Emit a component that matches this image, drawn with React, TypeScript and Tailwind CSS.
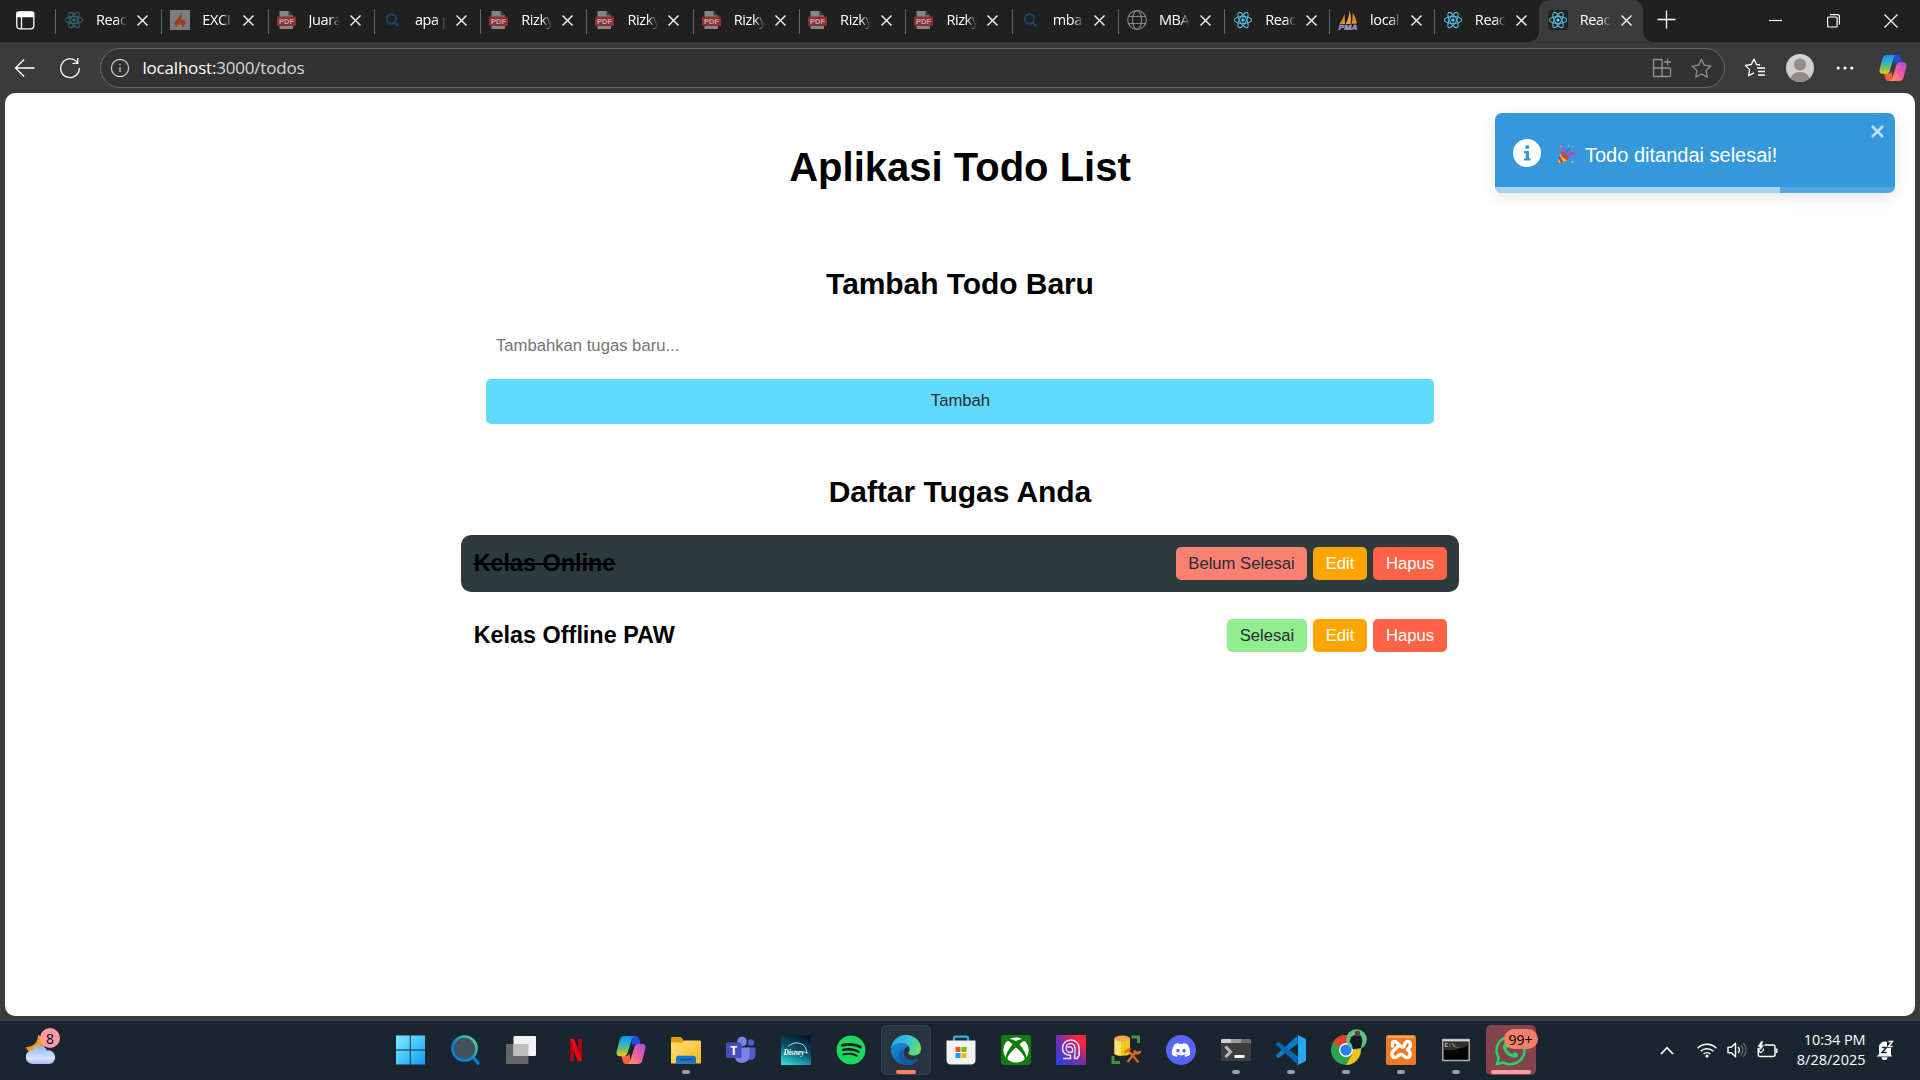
import React from "react";
import { FaDiscord, FaSpotify, FaWhatsapp, FaXbox } from "react-icons/fa";

type TabKind = "react" | "fire" | "pdf" | "search" | "globe" | "pma";
type TabInfo = { kind: TabKind; title: string; dim?: boolean; active?: boolean; narrow?: boolean };

const tabs: TabInfo[] = [
  { kind: "react", title: "Reac", dim: true },
  { kind: "fire", title: "EXCI" },
  { kind: "pdf", title: "Juara" },
  { kind: "search", title: "apa p" },
  { kind: "pdf", title: "Rizky" },
  { kind: "pdf", title: "Rizky" },
  { kind: "pdf", title: "Rizky" },
  { kind: "pdf", title: "Rizky" },
  { kind: "pdf", title: "Rizky" },
  { kind: "search", title: "mba" },
  { kind: "globe", title: "MBA" },
  { kind: "react", title: "Reac", narrow: true },
  { kind: "pma", title: "local", narrow: true },
  { kind: "react", title: "Reac", narrow: true },
  { kind: "react", title: "Reac", narrow: true, active: true },
];

function ReactLogo() {
  return (
    <svg width="20" height="20" viewBox="0 0 20 20" fill="none" stroke="#4fb8d3" strokeWidth="1.1">
      <ellipse cx="10" cy="10" rx="8.6" ry="3.4" />
      <ellipse cx="10" cy="10" rx="8.6" ry="3.4" transform="rotate(60 10 10)" />
      <ellipse cx="10" cy="10" rx="8.6" ry="3.4" transform="rotate(120 10 10)" />
      <circle cx="10" cy="10" r="1.6" fill="#61dafb" stroke="none" />
    </svg>
  );
}

function TabIcon({ kind }: { kind: TabKind }) {
  switch (kind) {
    case "react":
      return <ReactLogo />;
    case "fire":
      return (
        <svg width="20" height="20" viewBox="0 0 20 20">
          <rect width="20" height="20" fill="#7d7d7d" />
          <path d="M9.6 2.8c1.6 2.3-.6 4.1-2.3 6-1.400 1.600-2.900 3.200-2.700 5.300.2 1.700 1.300 3 2.900 3.500-.9-1.300-.6-2.700.7-3.700.1 1 .7 1.300 1.300 1.300.9-.1 1.200-1 .8-2 1.700.9 2.500 2.900 1.100 4.400 2.200-.6 4.100-2.400 4-4.900-.1-1.800-1.300-2.700-2-3.900-.4.500-.4 1-.3 1.600-1.400-.4-1.600-1.500-1.400-2.800.2-1.900-.6-3.900-2.100-4.800z" fill="#98401b" />
        </svg>
      );
    case "pdf":
      return (
        <svg width="20" height="20" viewBox="0 0 20 20">
          <path d="M2.500 1h9l4.500 4.500V19H2.500z" fill="#858585" />
          <path d="M11.500 1l4.500 4.500h-4.500z" fill="#3c3c3c" />
          <rect x="0" y="6.500" width="19" height="9.500" rx="1" fill="#8d2f33" />
          <text x="9.500" y="14" textAnchor="middle" fontSize="7.500" fontWeight="700" fontFamily="Liberation Sans, sans-serif" fill="#b9b1b1" textLength="15">
            PDF
          </text>
        </svg>
      );
    case "search":
      return (
        <svg width="20" height="20" viewBox="0 0 20 20" fill="none" stroke="#1c446b" strokeWidth="2">
          <circle cx="8.500" cy="9" r="4.700" />
          <path d="M11.800 12.500l3.600 3.800" />
        </svg>
      );
    case "globe":
      return (
        <svg width="20" height="20" viewBox="0 0 20 20" fill="none" stroke="#858585" strokeWidth="1.200">
          <circle cx="10" cy="10" r="9.300" />
          <ellipse cx="10" cy="10" rx="4.500" ry="9.300" />
          <path d="M1.500 6.500h17M1.500 13.500h17" />
        </svg>
      );
    case "pma":
      return (
        <svg width="20" height="20" viewBox="0 0 20 20">
          <path d="M6.500 3.500L7 14H1.500C3.500 11 5.500 8 6.500 3.500z" fill="#e98a22" />
          <path d="M11.500.3C13 5 13.300 10 12.500 14H7.800C10 10 11.300 5 11.500.3z" fill="#f6a02c" />
          <path d="M14.500 3c2.500 3 3.500 6 4.500 10.500l-5.500.5c1-4 1.300-7 1-11z" fill="#e98a22" />
          <text x="10" y="19.500" textAnchor="middle" fontSize="7.500" fontStyle="italic" fontWeight="700" fontFamily="Liberation Sans, sans-serif" fill="#6d70a8" stroke="#b9bbd8" strokeWidth=".4" textLength="19" lengthAdjust="spacingAndGlyphs">
            PMA
          </text>
        </svg>
      );
  }
}

function CloseGlyph() {
  return (
    <svg width="11" height="11" viewBox="0 0 11 11" stroke="#fff" strokeWidth="1.350" fill="none">
      <path d="M.5.500l10 10M10.500.500l-10 10" />
    </svg>
  );
}

function Tab({ tab }: { tab: TabInfo }) {
  return (
    <div className={`relative h-[42px] shrink-0 ${tab.narrow ? "w-[104.8px]" : "w-[106.3px]"} ${tab.active ? "rounded-t-[10px] bg-[#3b3b3b]" : ""}`}>
      {tab.active && (
        <>
          <div className="absolute bottom-0 -left-[10px] size-[10px] bg-[radial-gradient(circle_at_0_0,transparent_9.500px,#3b3b3b_10px)]" />
          <div className="absolute -right-[10px] bottom-0 size-[10px] bg-[radial-gradient(circle_at_100%_0,transparent_9.500px,#3b3b3b_10px)]" />
        </>
      )}
      <div className="flex h-[42px] items-start">
        <div className={`mt-[9px] h-[25px] w-px shrink-0 ${tab.active ? "bg-transparent" : "bg-[#666666]"}`} />
        <div className={`mt-[10px] ml-2 size-5 shrink-0 ${tab.dim ? "opacity-45" : ""} ${tab.active ? "rounded-[3px] bg-[#222222]" : ""}`}>
          <TabIcon kind={tab.kind} />
        </div>
        <div className="mt-[9px] ml-3 w-[38px] shrink-0 whitespace-nowrap font-['Open_Sans',sans-serif] text-[14.500px] leading-[22px] tracking-[-0.400px] text-white [mask-image:linear-gradient(to_right,#000_20px,transparent_31px)]">
          {tab.title}
        </div>
        <div className="mt-[15px] ml-[3px]">
          <CloseGlyph />
        </div>
      </div>
    </div>
  );
}

function Copilot({ id, size }: { id: string; size: number }) {
  return (
    <svg width={size} height={size} viewBox="0 0 28 28">
      <defs>
        <linearGradient id={id + "a"} x1="0" y1="0" x2="0" y2="1">
          <stop offset="0" stopColor="#1a8cf0" />
          <stop offset=".35" stopColor="#22b3d8" />
          <stop offset=".65" stopColor="#6ec06a" />
          <stop offset="1" stopColor="#f8c70c" />
        </linearGradient>
        <linearGradient id={id + "b"} x1="1" y1="0" x2="0" y2="1">
          <stop offset="0" stopColor="#a24bf5" />
          <stop offset=".5" stopColor="#ef5c9d" />
          <stop offset="1" stopColor="#ff9a4c" />
        </linearGradient>
      </defs>
      <path d="M14 1h4.500c2 0 2.700 1.300 3.200 3l1.300 4.500h-4.500c-1.700 0-2.400.8-3 2.500z" fill="#1c4fd6" />
      <path d="M14 27H9.500c-2 0-2.700-1.300-3.200-3L5 19.500h4.500c1.700 0 2.400-.8 3-2.500z" fill="#f7603c" />
      <path d="M7.500 1h9.500c-1.300.5-2 1.800-2.500 3.500L10.700 17c-.7 2-1.700 2.800-3.500 2.800H3.700C.9 19.800 0 17.500.7 15L3.500 4.500C4.200 2 5.500 1 7.500 1z" fill={`url(#${id}a)`} />
      <path d="M20.500 27H11c1.300-.5 2-1.800 2.500-3.500L17.300 11c.7-2 1.700-2.800 3.500-2.800h3.500c2.800 0 3.700 2.300 3 4.800l-2.800 10.500C23.800 26 22.500 27 20.500 27z" fill={`url(#${id}b)`} />
    </svg>
  );
}

function TitleBar() {
  return (
    <div className="flex h-[42px] bg-[#202020]">
      <div className="flex w-[55px] shrink-0 pt-[11px] pl-[16px]">
        <svg width="19" height="19" viewBox="0 0 19 19" fill="none" stroke="#fff" strokeWidth="1.300">
          <rect x=".8" y=".8" width="17" height="17" rx="3" />
          <path d="M1 1.500h16.500v4H1z" fill="#fff" />
          <path d="M5.500 5v13" />
        </svg>
      </div>
      {tabs.map((tab, i) => (
        <Tab key={i} tab={tab} />
      ))}
      <svg className="mt-[10px] ml-[14px] shrink-0" width="19" height="19" viewBox="0 0 19 19" stroke="#fff" strokeWidth="1.300">
        <path d="M9.500.500v18M.500 9.500h18" />
      </svg>
      <div className="ml-auto flex h-[42px] items-center pr-[22px] text-white">
        <svg width="13" height="14" viewBox="0 0 13 14" stroke="currentColor" strokeWidth="1.200">
          <path d="M0 6.500h13" />
        </svg>
        <svg className="ml-[45px]" width="13" height="14" viewBox="0 0 13 14" fill="none" stroke="currentColor" strokeWidth="1.200">
          <rect x=".6" y="3" width="9.500" height="10" rx="1" />
          <path d="M3 .7h7.500c1 0 1.900.9 1.900 1.900v8" />
        </svg>
        <svg className="ml-[44px]" width="14" height="14" viewBox="0 0 14 14" stroke="currentColor" strokeWidth="1.200">
          <path d="M.5.500l13 13M13.500.500l-13 13" />
        </svg>
      </div>
    </div>
  );
}

const starPath = "M10 1.200l2.700 5.700 6.200.8-4.600 4.300 1.200 6.200L10 15.200l-5.500 3 1.200-6.200L1.100 7.700l6.200-.8z";

function AddressBar() {
  return (
    <div className="flex h-[51px] items-center border-t border-[#333333] bg-[#3b3b3b]">
      <svg className="ml-[14px] shrink-0" width="22" height="20" viewBox="0 0 22 20" fill="none" stroke="#fff" strokeWidth="1.300">
        <path d="M20.500 10H1.500M10 1.500L1.500 10l8.500 8.500" />
      </svg>
      <svg className="ml-[23px] shrink-0" width="22" height="22" viewBox="0 0 22 22" fill="none" stroke="#fff" strokeWidth="1.300">
        <path d="M18.300 5.500A9.300 9.300 0 1 0 20.300 11M18.800 1v5.300h-5.300" />
      </svg>
      <div className="ml-[19px] flex h-10 w-[1625px] shrink-0 items-center rounded-full border border-[#6b6b6b] bg-[#323232]">
        <svg className="ml-[9px] shrink-0" width="20" height="20" viewBox="0 0 20 20" fill="none" stroke="#d0d0d0" strokeWidth="1.200">
          <circle cx="10" cy="10" r="8.600" />
          <path d="M10 9v5M10 5.800v1.500" />
        </svg>
        <div className="ml-[12.500px] font-['Open_Sans',sans-serif] text-[17px] leading-6 tracking-[-0.200px] text-white">
          localhost:<span className="text-[#d6d6d6]">3000/todos</span>
        </div>
        <div className="ml-auto flex items-center pr-[12.500px]">
          <svg width="20" height="20" viewBox="0 0 20 20" fill="none" stroke="#929292" strokeWidth="1.300">
            <path d="M10 1.500H2.500a1 1 0 0 0-1 1v15a1 1 0 0 0 1 1h15a1 1 0 0 0 1-1V11a1 1 0 0 0-1-1h-16M10 18.500v-17M15.500 0.500v7M12 4h7" />
          </svg>
          <svg className="ml-[19px]" width="21" height="21" viewBox="0 0 20 20" fill="none" stroke="#929292" strokeWidth="1.200" strokeLinejoin="round">
            <path d={starPath} />
          </svg>
        </div>
      </div>
      <svg className="ml-[19px] shrink-0" width="22" height="22" viewBox="0 0 22 22" fill="none" stroke="#fff" strokeWidth="1.300" strokeLinejoin="round">
        <path d="M16 8l-3.500-.5L10 2 7.300 7.500l-6 .9 4.300 4.200-1 6.200 5.400-2.900M13 11h8M14 14.500h7M14 18h7" />
      </svg>
      <svg className="ml-[20px] shrink-0" width="28" height="28" viewBox="0 0 28 28">
        <defs>
          <clipPath id="avatar">
            <circle cx="14" cy="14" r="14" />
          </clipPath>
        </defs>
        <g clipPath="url(#avatar)">
          <rect width="28" height="28" fill="#d2d0ce" />
          <circle cx="14" cy="10.500" r="6" fill="#8f8c89" />
          <ellipse cx="14" cy="25" rx="9.500" ry="7" fill="#8f8c89" />
        </g>
      </svg>
      <svg className="ml-[22px] shrink-0" width="18" height="4" viewBox="0 0 18 4" fill="#fff">
        <circle cx="2.200" cy="2" r="1.600" />
        <circle cx="9" cy="2" r="1.600" />
        <circle cx="15.800" cy="2" r="1.600" />
      </svg>
      <div className="ml-[25px] shrink-0">
        <Copilot id="top" size={28} />
      </div>
    </div>
  );
}

function ActionButton({ label, tone }: { label: string; tone: string }) {
  return <button className={`h-[33px] rounded-[5px] text-center text-[16.667px] leading-[33px] ${tone}`}>{label}</button>;
}

function TodoRow({ title, done }: { title: string; done?: boolean }) {
  return (
    <li className={`flex h-[57px] items-center justify-between rounded-[10px] px-[12px] ${done ? "bg-[#2d3b3c]" : ""}`}>
      <h3 className={`pl-[0.700px] text-[23.400px] leading-[27px] font-bold text-black ${done ? "line-through" : ""}`}>{title}</h3>
      <div className="flex gap-[6px]">
        {done ? (
          <ActionButton label="Belum Selesai" tone="w-[131px] bg-[#fa8072] text-[#282c34]" />
        ) : (
          <ActionButton label="Selesai" tone="w-[80px] bg-[#90ee90] text-[#282c34]" />
        )}
        <ActionButton label="Edit" tone="w-[54px] bg-[#ffa500] text-white" />
        <ActionButton label="Hapus" tone="w-[74px] bg-[#ff6347] text-white" />
      </div>
    </li>
  );
}

function PartyPopper() {
  return (
    <svg width="20" height="20" viewBox="0 0 20 20">
      <path d="M4.500 7.500l7.500 7.500L1 19.800z" fill="#f9b233" />
      <path d="M3.600 10.500l3.600 6.600-2 .9-2.600-4.700z" fill="#7a4a9c" />
      <path d="M1.800 16.500l1.700 2.200L1 19.800z" fill="#7a4a9c" />
      <ellipse cx="8.700" cy="10.800" rx="5.300" ry="2.400" transform="rotate(45 8.700 10.800)" fill="#b4552e" />
      <path d="M7 9.500c2-2 2.200-4.500.5-7M11.500 11.500c1.800-3 4-4 7.500-3" stroke="#f0309b" strokeWidth="2" fill="none" />
      <path d="M9.500 9.500c.8-3 2.500-5 5-6" stroke="#3f6df0" strokeWidth="1.800" fill="none" />
      <path d="M12 13.500c2-.8 4-.5 5.500.5" stroke="#3f8df0" strokeWidth="1.500" fill="none" />
      <circle cx="1.800" cy="4" r="1.100" fill="#ee3aa0" />
      <circle cx="4.500" cy="1.500" r=".8" fill="#ff9d2e" />
      <circle cx="18" cy="4" r="1.100" fill="#ee3aa0" />
      <circle cx="16.500" cy="17" r="1.100" fill="#ffb03c" />
      <circle cx="12.500" cy="1" r=".9" fill="#43c3f5" />
      <circle cx="16.500" cy="1.500" r=".8" fill="#55d6e8" />
    </svg>
  );
}

function Toast() {
  return (
    <div className="absolute top-[20px] right-[20px] flex h-20 w-[400px] overflow-hidden rounded-[7px] bg-[#3498db] shadow-[0_5px_15px_rgba(0,0,0,0.1)]">
      <svg className="mt-[26px] ml-[18px] shrink-0" width="28" height="28" viewBox="0 0 28 28">
        <circle cx="14" cy="14" r="14" fill="#fff" />
        <circle cx="14.300" cy="8" r="2.100" fill="#3498db" />
        <path d="M11 12h5v7.200h1.500V21.500h-6.500v-2.300h1.700v-4.900H11z" fill="#3498db" />
      </svg>
      <div className="mt-[32px] ml-[15px]">
        <PartyPopper />
      </div>
      <div className="mt-[29px] ml-[9px] text-[20px] leading-[27px] whitespace-nowrap text-white">Todo ditandai selesai!</div>
      <svg className="absolute top-[12px] right-[11px]" width="13" height="13" viewBox="0 0 13 13" stroke="#fff" strokeOpacity=".7" strokeWidth="2.500">
        <path d="M1 1l11 11M12 1L1 12" />
      </svg>
      <div className="absolute inset-x-0 bottom-0 h-[6px] bg-white/15">
        <div className="h-full w-[284.500px] bg-white/50" />
      </div>
    </div>
  );
}

function Page() {
  return (
    <div className="relative mx-[5px] h-[923px] rounded-[10px] bg-white font-['Liberation_Sans',Arial,sans-serif]">
      <Toast />
      <main className="relative mx-auto flex w-[998px] flex-col pt-[51px] text-black">
        <h1 className="text-center text-[40px] leading-[46px] font-bold">Aplikasi Todo List</h1>
        <h2 className="mt-[76px] text-center text-[30px] leading-[35px] font-bold tracking-[-0.070px]">Tambah Todo Baru</h2>
        <div className="mx-[25px] mt-[25px] flex flex-col">
          <input className="h-[38px] px-[10px] pt-[2px] text-[16.667px] outline-none placeholder:text-[#757575]" placeholder="Tambahkan tugas baru..." />
          <button className="mt-[15px] h-[45px] rounded-[5px] bg-[#61dafb] pb-[3px] pl-px text-[16.667px] text-[#282c34]">Tambah</button>
        </div>
        <h2 className="mt-[51px] text-center text-[30px] leading-[34px] font-bold tracking-[-0.050px]">Daftar Tugas Anda</h2>
        <ul className="mt-[26px] flex flex-col gap-[15px]">
          <TodoRow title="Kelas Online" done />
          <TodoRow title="Kelas Offline PAW" />
        </ul>
      </main>
    </div>
  );
}

type AppEntry = { icon: React.ReactNode; running?: boolean; state?: "active" | "alert" };

const apps: AppEntry[] = [
  {
    icon: (
      <svg width="30" height="30" viewBox="0 0 30 30">
        <defs>
          <linearGradient id="win" gradientUnits="userSpaceOnUse" x1="0" y1="0" x2="30" y2="30">
            <stop offset="0" stopColor="#7df0ff" />
            <stop offset="1" stopColor="#0c9bfb" />
          </linearGradient>
        </defs>
        <path d="M-.5.500h14.300v14H-.5zM14.700.500h14.300v14h-14.300zM-.5 15.500h14.300v14H-.5zM14.700 15.500h14.300v14h-14.300z" fill="url(#win)" />
      </svg>
    ),
  },
  {
    icon: (
      <svg width="30" height="32" viewBox="0 0 30 32">
        <defs>
          <linearGradient id="srch" x1="1" y1="0" x2="0" y2="1">
            <stop offset="0" stopColor="#5fe08a" />
            <stop offset=".35" stopColor="#2aaeb0" />
            <stop offset=".6" stopColor="#0c7fd8" />
          </linearGradient>
        </defs>
        <path d="M22 23l5 6" stroke="#0a78d4" strokeWidth="3.500" strokeLinecap="round" />
        <circle cx="13.500" cy="14.500" r="12" fill="#44525c" stroke="url(#srch)" strokeWidth="2.600" />
      </svg>
    ),
  },
  {
    icon: (
      <svg width="30" height="30" viewBox="0 0 30 30">
        <rect x="0" y="9" width="22.500" height="20" rx="1" fill="#656565" />
        <rect x="7.500" y="1" width="22.500" height="20" rx="1" fill="#f2f2f2" />
        <rect x="7.500" y="9" width="15" height="12" fill="#bdbdbd" />
      </svg>
    ),
  },
  {
    icon: (
      <svg width="30" height="30" viewBox="0 0 30 30">
        <rect x="9" y="4" width="4" height="22" fill="#a9090f" />
        <rect x="17" y="4" width="4" height="22" fill="#a9090f" />
        <rect x="13.200" y="4" width="4.200" height="22" fill="#e50914" transform="translate(-5.500 0) skewX(19)" />
      </svg>
    ),
  },
  { icon: <Copilot id="task" size={30} /> },
  {
    running: true,
    icon: (
      <svg width="30" height="30" viewBox="0 0 30 30">
        <defs>
          <linearGradient id="fold" x1="0" y1="0" x2="1" y2="1">
            <stop offset="0" stopColor="#ffdf7a" />
            <stop offset="1" stopColor="#f9b81f" />
          </linearGradient>
        </defs>
        <path d="M0 3.500c0-.8.5-1.500 1.500-1.500H10l3 3.500V10H0z" fill="#dfa006" />
        <path d="M0 7.500h11l2.500-2h15c.8 0 1.500.6 1.500 1.500v20.500c0 .6-.4 1-1 1H1c-.6 0-1-.4-1-1z" fill="url(#fold)" />
        <path d="M5 28.500V23c0-1.300 1-2.300 2.300-2.300h15.400c1.300 0 2.300 1 2.300 2.300v5.500z" fill="#1378cc" />
        <path d="M8.500 24.500h13" stroke="#0b4f93" strokeWidth="1.300" />
      </svg>
    ),
  },
  {
    icon: (
      <svg width="30" height="30" viewBox="0 0 30 30">
        <circle cx="25" cy="7.500" r="3.200" fill="#5059c9" />
        <path d="M20 12.500h9.500V20a5 5 0 0 1-8 4z" fill="#5059c9" />
        <circle cx="16" cy="6.500" r="4.800" fill="#7b83eb" />
        <path d="M9 12.500h14.500V21a7.500 7.500 0 0 1-14.500 2z" fill="#7b83eb" />
        <rect x="0" y="7.500" width="15.500" height="15.500" rx="1.500" fill="#464eb8" />
        <text x="7.700" y="19.500" textAnchor="middle" fontSize="12" fontWeight="700" fontFamily="Open Sans, sans-serif" fill="#fff">
          T
        </text>
      </svg>
    ),
  },
  {
    icon: (
      <svg width="30" height="30" viewBox="0 0 30 30">
        <defs>
          <linearGradient id="dis" x1=".7" y1="0" x2=".3" y2="1">
            <stop offset="0" stopColor="#03182f" />
            <stop offset=".5" stopColor="#075469" />
            <stop offset="1" stopColor="#2fd0d6" />
          </linearGradient>
        </defs>
        <rect width="30" height="30" fill="url(#dis)" />
        <path d="M7 11.500c5-5.500 17-5 18.500 4" stroke="#d7e8ee" strokeWidth=".9" fill="none" />
        <text x="15" y="20" textAnchor="middle" fontSize="8" fontStyle="italic" fontWeight="700" fontFamily="Liberation Serif, serif" fill="#fff" textLength="25" lengthAdjust="spacingAndGlyphs">
          Disney+
        </text>
      </svg>
    ),
  },
  { icon: <FaSpotify className="size-[30px] rounded-full bg-[#12201a] text-[#1ed760]" /> },
  {
    state: "active",
    icon: (
      <svg width="30" height="30" viewBox="0 0 30 30">
        <defs>
          <linearGradient id="edgeTop" x1="0" y1=".3" x2="1" y2=".6">
            <stop offset="0" stopColor="#2aa5dd" />
            <stop offset=".5" stopColor="#35c4dc" />
            <stop offset="1" stopColor="#6be35a" />
          </linearGradient>
          <linearGradient id="edgeBody" x1="0" y1="0" x2=".7" y2="1">
            <stop offset="0" stopColor="#1b9be6" />
            <stop offset="1" stopColor="#0c59a4" />
          </linearGradient>
        </defs>
        <circle cx="15" cy="15" r="15" fill="url(#edgeBody)" />
        <path d="M17.500 17c.2 1.500 1.500 3 5 3.500 3 0 5.500-.6 8-2.500l-1.500 8-3-1c-6 2-13-1-13.500-7-.2-3 1.500-5.500 4-6.500 2 .5 3 1.500 3 3 0 1.200-1.500 1.500-2 2.500z" fill="#28353f" />
        <path d="M0 14C.5 6 7 0 15 0c9 0 15 6.500 15 13.500 0 4.500-3.500 7-7.500 7-3.500 0-5-1.500-5-2.500 0-.8 1.200-1.500 1.200-4 0-3.500-3.500-6-8-6C5.500 8 1.500 10.500 0 14z" fill="url(#edgeTop)" />
        <path d="M11.500 14.500c-2 7 6 12.500 15 9.500.8-.3 1.200.3.700.9C23.500 29 19 30.500 15 30 8 28 5 20 11.500 14.500z" fill="#125ca6" />
      </svg>
    ),
  },
  {
    icon: (
      <svg width="30" height="30" viewBox="0 0 30 30">
        <path d="M8 7V3c0-.8.500-1.300 1.300-1.300h11.400c.8 0 1.300.5 1.300 1.300v4" stroke="#28b4ee" strokeWidth="2.200" fill="none" />
        <path d="M.5 5.500h29V25c0 2.800-1.700 4.500-4.500 4.500H5C2.200 29.500.5 27.800.5 25z" fill="#f1f1f1" />
        <path d="M9.500 12h5v5h-5z" fill="#f25022" />
        <path d="M15.500 12h5v5h-5z" fill="#7fba00" />
        <path d="M9.500 18h5v5h-5z" fill="#00a4ef" />
        <path d="M15.500 18h5v5h-5z" fill="#ffb900" />
      </svg>
    ),
  },
  {
    icon: (
      <div className="flex size-[30px] items-center justify-center rounded-[3px] bg-[#107c10]">
        <FaXbox className="size-[26px] text-white" />
      </div>
    ),
  },
  {
    icon: (
      <svg width="30" height="30" viewBox="0 0 30 30" fill="none">
        <defs>
          <linearGradient id="pred" x1="0" y1="1" x2="1" y2="0">
            <stop offset="0" stopColor="#2340f0" />
            <stop offset=".5" stopColor="#7a2fa5" />
            <stop offset=".8" stopColor="#f5283f" />
          </linearGradient>
        </defs>
        <rect width="30" height="30" fill="url(#pred)" />
        <path d="M7 23.500h7.500v-3.300c-5-.2-8-3-8-7a8.300 8.300 0 0 1 16.600 0v7.300l-2 3h-2.500v-3.500" stroke="#f3e3f5" strokeWidth="1.500" />
        <path d="M14.500 17.500a4.500 4.500 0 1 1 4.500-4.500v7M11.500 12.500a3 2.500 0 0 1 5 1v3.500h-2" stroke="#f3e3f5" strokeWidth="1.300" />
      </svg>
    ),
  },
  {
    icon: (
      <svg width="30" height="30" viewBox="0 0 30 30" fill="none">
        <path d="M20.500 2h7v6M2 21v6.500h7" stroke="#3d9444" strokeWidth="3" />
        <path d="M3.500 3.500v15c0 1.200 3.400 2.300 7.800 2.300s7.700-1.100 7.700-2.300v-15z" fill="#f6c918" />
        <path d="M3.500 3.500v15c0 1 2.500 2 6.500 2.300V4z" fill="#fbe271" />
        <ellipse cx="11.200" cy="3.500" rx="7.800" ry="3" fill="#f1a950" />
        <path d="M16.500 27l9-11M17 15l10.500 12.500" stroke="#e36a0c" strokeWidth="2.200" />
        <path d="M13.500 17.500l6-4M23.500 15.500c0 3.500 4.500 3.500 6 .5" stroke="#e36a0c" strokeWidth="2.600" />
      </svg>
    ),
  },
  {
    icon: (
      <div className="flex size-[30px] items-center justify-center rounded-full bg-[#5865f2]">
        <FaDiscord className="size-5 text-white" />
      </div>
    ),
  },
  {
    running: true,
    icon: (
      <svg width="30" height="30" viewBox="0 0 30 30" fill="none">
        <rect x="0" y="4" width="30" height="22" rx="1.500" fill="#3d3d3f" />
        <path d="M0 8V5.500C0 4.700.7 4 1.500 4H10v4z" fill="#d0d0d2" />
        <path d="M10 4h10v4H10z" fill="#9c9c9f" />
        <path d="M20 4h8.500c.8 0 1.500.7 1.500 1.500V8H20z" fill="#6e6e72" />
        <path d="M4.500 11.500l5 5.300-5 5.200" stroke="#b9b9b9" strokeWidth="3" />
        <path d="M13.500 21.500h10" stroke="#f4f4f4" strokeWidth="3" />
      </svg>
    ),
  },
  {
    running: true,
    icon: (
      <svg width="30" height="30" viewBox="0 0 30 30">
        <path d="M22 8.500L3 22.700c-.5.4-1 .3-1.400 0l-1.300-1.200c-.4-.4-.4-1 0-1.400L21 1z" fill="#0f7ac7" />
        <path d="M22 21.500L3 7.300c-.5-.4-1-.3-1.400 0L.3 8.500c-.4.4-.4 1 0 1.400L21 29z" fill="#0867ac" />
        <path d="M22 .2l6.600 3.100c.9.400 1.400 1 1.400 2v19.400c0 1-.5 1.600-1.400 2L22 29.800c-.8.300-1.500.1-2-.5.7.6 2 .2 2-1V1.700c0-1.200-1.300-1.600-2-1 .5-.6 1.200-.8 2-.5z" fill="#29a8f2" />
      </svg>
    ),
  },
  {
    running: true,
    icon: (
      <div className="relative">
        <svg width="30" height="30" viewBox="0 0 30 30">
          <circle cx="15" cy="15" r="15" fill="#2ca24c" />
          <path d="M15 15L2 7.500A15 15 0 0 1 28 7.500H15z" fill="#e43e31" />
          <path d="M15 7.800h13A15 15 0 0 1 15 30l6.500-11.300z" fill="#fbc116" />
          <circle cx="15" cy="15" r="7" fill="#fff" />
          <circle cx="15" cy="15" r="5.600" fill="#2b7de9" />
        </svg>
        <svg className="absolute -top-[6px] -right-[6px]" width="21" height="21" viewBox="0 0 21 21">
          <circle cx="10.500" cy="10.500" r="10.300" fill="#5fc77b" />
          <path d="M5 8l4-2 6 .5 1.500 5-1.500 7.500-8 1.200L5.500 15l-2-2z" fill="#151a28" />
          <circle cx="11.500" cy="4.500" r="2.700" fill="#6b3b3c" />
        </svg>
      </div>
    ),
  },
  {
    running: true,
    icon: (
      <svg width="30" height="30" viewBox="0 0 30 30" fill="none">
        <rect width="30" height="30" rx="2.500" fill="#ef7a22" />
        <path d="M2 2h26" stroke="#f9b27a" strokeWidth="1.500" />
        <g stroke="#fff" strokeWidth="3.400" strokeLinecap="round" strokeLinejoin="round">
          <path d="M6.500 11V8.500c0-1.200.8-2 2-2 3.500 0 4 5.500 8.500 5.500 1.800 0 1-5.500 4.500-5.500s3.500 4.500 1.500 6.500l-1.500 1.500c4 2.500 3 8-.5 8s-2.500-3-6-3-2.500 3-6 3-4-4.500-1.500-7l4.500-4" />
        </g>
      </svg>
    ),
  },
  {
    running: true,
    icon: (
      <svg width="28" height="24" viewBox="0 0 28 24" fill="none">
        <rect x=".8" y="1.500" width="26.400" height="21" fill="#050505" stroke="#a8adb0" strokeWidth="1.500" />
        <path d="M1 2.500h26" stroke="#d3d7d9" strokeWidth="2" />
        <path d="M2 12c8 1 18-1 24-5V4H2z" fill="#303030" />
        <text x="2.500" y="9" fontSize="6" fontWeight="700" fontFamily="Liberation Mono, monospace" fill="#d8d8d8">
          C:\_
        </text>
      </svg>
    ),
  },
  { state: "alert", icon: <FaWhatsapp className="size-[35px] text-[#25d366]" /> },
];

function TaskbarApp({ app }: { app: AppEntry }) {
  const shell =
    app.state === "active"
      ? "border border-[#33404a] bg-[#28353f]"
      : app.state === "alert"
        ? "bg-[#83454d]"
        : "";
  return (
    <div className="flex w-[55px] shrink-0 justify-center">
      <div className={`relative flex size-[50px] items-center justify-center rounded-[5px] ${shell}`}>
        {app.icon}
        {app.running && <div className="absolute bottom-[1px] left-[21px] h-1 w-2 rounded-full bg-[#9a9fa4]" />}
        {app.state === "active" && <div className="absolute bottom-0 left-[14px] h-1 w-5 rounded-full bg-[#f4806a]" />}
        {app.state === "alert" && (
          <>
            <div className="absolute bottom-[1px] left-[5px] h-1 w-10 rounded-full bg-[#fc9ba6]" />
            <div className="absolute top-[4px] -right-[2px] flex h-5 w-[34px] items-center justify-center rounded-full bg-[#f4806a] font-['Open_Sans',sans-serif] text-[14px] text-black">
              99+
            </div>
          </>
        )}
      </div>
    </div>
  );
}

function Weather() {
  return (
    <div className="relative ml-[26px] h-[30px] w-[30px] shrink-0">
      <svg width="30" height="30" viewBox="0 0 30 30">
        <defs>
          <linearGradient id="cloud" x1="0" y1="0" x2="0" y2="1">
            <stop offset="0" stopColor="#8fb2ee" />
            <stop offset=".7" stopColor="#d6e3fa" />
            <stop offset="1" stopColor="#a3bdf0" />
          </linearGradient>
        </defs>
        <path d="M12 0c0 7-4 12-12 12 1 4 5 7 10 6 6-1 10-6 9-11-1-4-4-6-7-7z" fill="#f09a24" />
        <path d="M7 29a7 7 0 0 1-.5-14A8 8 0 0 1 21 15.500 6.800 6.800 0 0 1 23.500 29z" fill="url(#cloud)" />
      </svg>
      <div className="absolute -top-[7px] left-[14px] flex size-5 items-center justify-center rounded-full bg-[#fc9ba6] font-['Open_Sans',sans-serif] text-[14px] text-black">
        8
      </div>
    </div>
  );
}

function Tray() {
  return (
    <div className="ml-auto flex items-center pr-[26px] text-white">
      <svg width="14" height="9" viewBox="0 0 14 9" fill="none" stroke="#fff" strokeWidth="1.700">
        <path d="M1 8l6-6.300L13 8" />
      </svg>
      <svg className="ml-[23px]" width="20" height="16" viewBox="0 0 20 16" fill="none" stroke="#fff" strokeWidth="1.500">
        <path d="M.7 6.200a13.200 13.200 0 0 1 18.600 0M3.700 9.200a9 9 0 0 1 12.600 0M6.600 12a4.900 4.900 0 0 1 6.800 0" />
        <circle cx="10" cy="14" r="1.600" fill="#fff" stroke="none" />
      </svg>
      <svg className="ml-[10px]" width="20" height="18" viewBox="0 0 20 18" fill="none" stroke="#fff" strokeWidth="1.400">
        <path d="M1 6.200h3.300L8.500 2.300v13.400l-4.200-3.900H1z" strokeLinejoin="round" />
        <path d="M11 6a4 4 0 0 1 0 6" />
        <path d="M13.700 4a7 7 0 0 1 0 10M16.300 2.200a9.700 9.700 0 0 1 0 13.600" stroke="#5b6770" />
      </svg>
      <svg className="ml-[10px]" width="21" height="18" viewBox="0 0 21 18" fill="none" stroke="#fff" strokeWidth="1.400">
        <path d="M7.500 4h8.500a2 2 0 0 1 2 2v7.500a2 2 0 0 1-2 2H3.200a2 2 0 0 1-2-2V7" />
        <path d="M19.500 7.500v4.500" strokeWidth="2" />
        <path d="M4.200.5L1 5.500h2L2 10l4.500-5.500H4.500L5.800.500z" fill="#fff" strokeWidth=".5" />
        <path d="M2.500 10c0 3 4 1 4-2.500" strokeWidth="1.200" />
      </svg>
      <div className="ml-[19px] text-right font-['Open_Sans',sans-serif] text-[14.500px] leading-5 whitespace-nowrap">
        <div className="tracking-[-0.100px]">10:34 PM</div>
        <div>8/28/2025</div>
      </div>
      <svg className="ml-[10.500px]" width="18" height="20" viewBox="0 0 18 20">
        <path d="M3 7.500a6 6 0 0 1 8-5.700V8h4v7l1.500 1.500H.500L3 14.500z" fill="#fff" />
        <path d="M5.500 17.200h6a3 3 0 0 1-6 0z" fill="#fff" />
        <path d="M6 7.500h4.500L6 12.500h4.700" stroke="#1a2530" strokeWidth="1.500" fill="none" />
        <path d="M12.500 1.500h4L12.500 6.500h4.200" stroke="#fff" strokeWidth="1.400" fill="none" />
      </svg>
    </div>
  );
}

export default function App() {
  return (
    <div className="flex h-[1080px] w-[1920px] flex-col overflow-hidden bg-[#3b3b3b]">
      <TitleBar />
      <AddressBar />
      <Page />
      <div className="mt-[4px] flex h-[60px] items-center border-t border-[#34424b] bg-[#1a2530] pb-px">
        <Weather />
        <div className="ml-[327px] flex shrink-0 items-center">
          {apps.map((app, i) => (
            <TaskbarApp key={i} app={app} />
          ))}
        </div>
        <Tray />
      </div>
    </div>
  );
}
